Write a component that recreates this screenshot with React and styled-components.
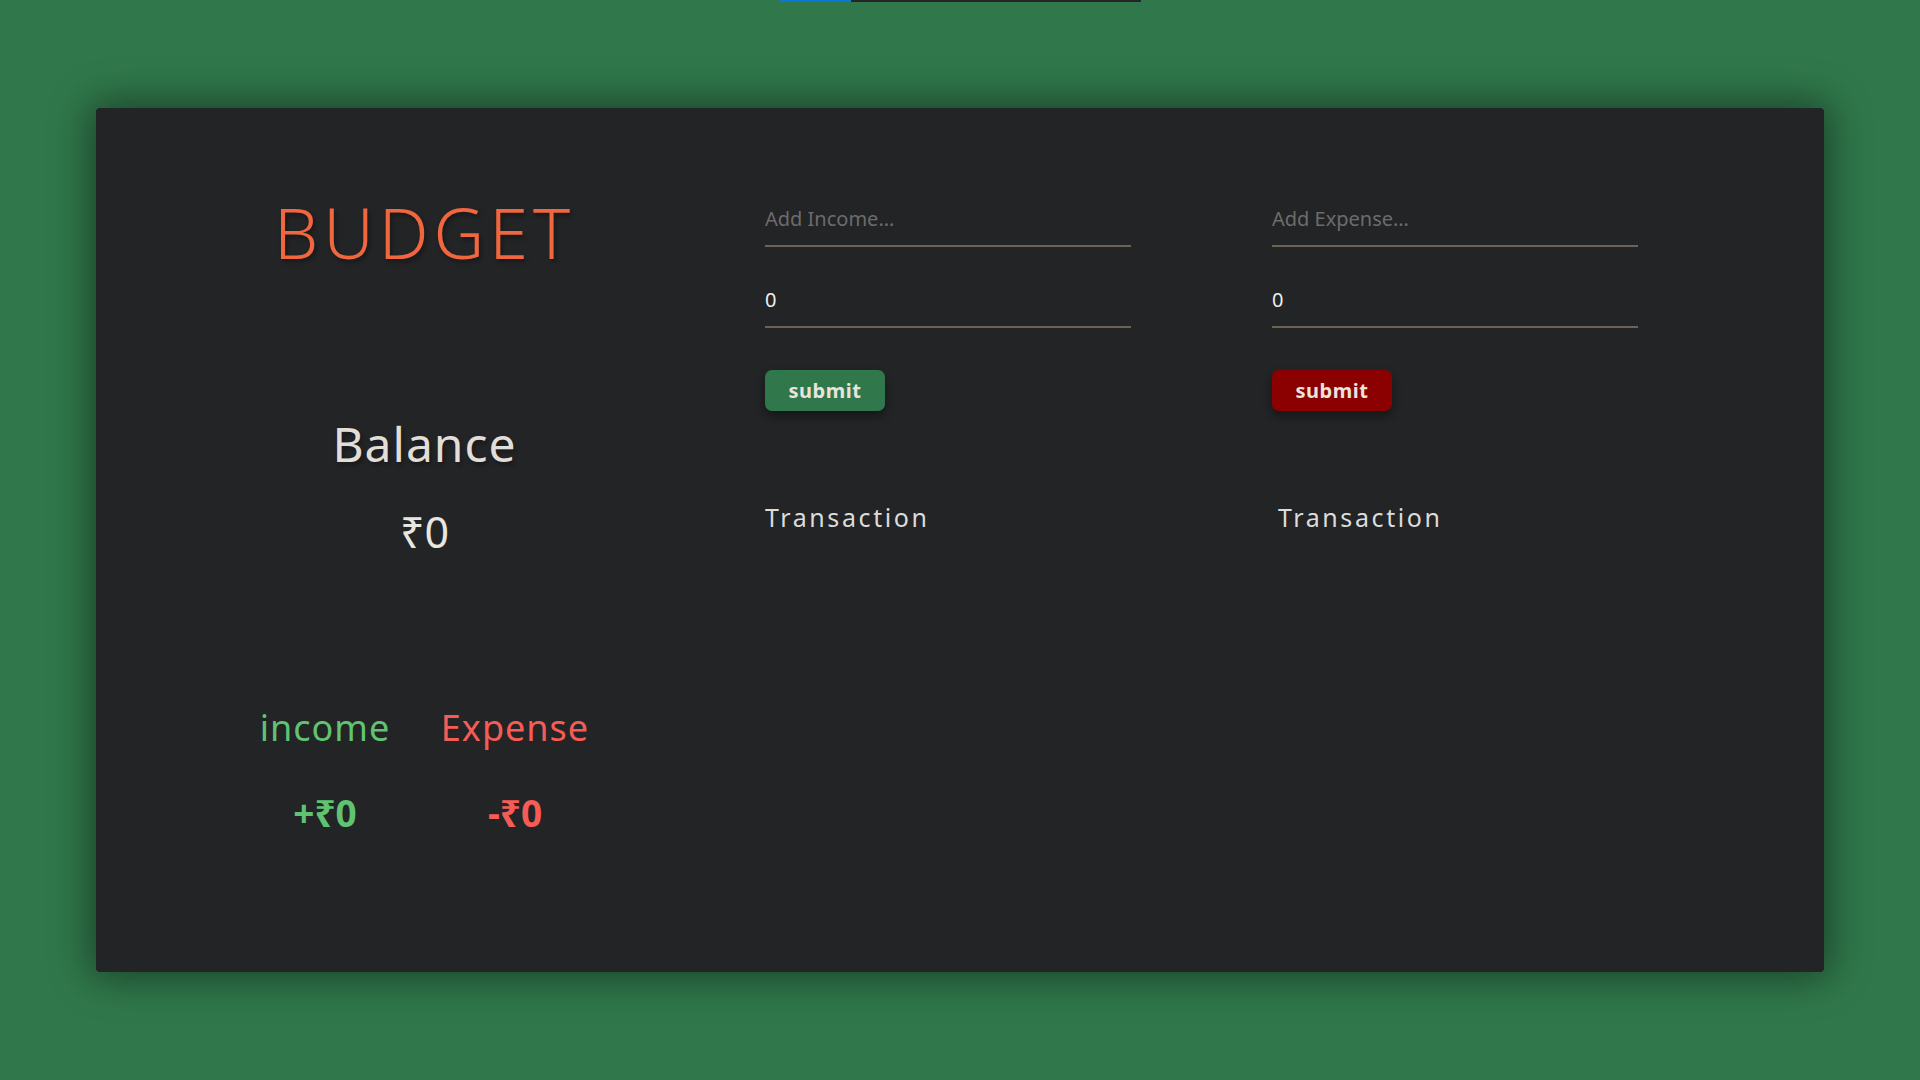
import React from 'react';
import styled, { createGlobalStyle } from 'styled-components';

const GlobalStyle = createGlobalStyle`
  html, body {
    margin: 0;
    padding: 0;
    background-color: #30784b;
    font-family: "Noto Sans", "DejaVu Sans", sans-serif;
  }
  * {
    box-sizing: border-box;
  }
`;

const Page = styled.div`
  min-height: 100vh;
  display: flex;
  flex-direction: column;
  align-items: center;
`;

const Progress = styled.div`
  width: 362px;
  height: 2px;
  background-color: #232426;
  & > span {
    display: block;
    height: 100%;
    width: ${p => p.$value}%;
    background-color: #0a78d4;
  }
`;

const Card = styled.div`
  width: 1728px;
  height: 864px;
  margin-top: 106px;
  padding-top: 89px;
  background-color: #232426;
  border-radius: 4px;
  box-shadow: 0 0 40px 6px rgba(0, 0, 0, 0.45);
  display: grid;
  grid-template-columns: 657px 495px 1fr;
  column-gap: 12px;
  align-items: start;
`;

const Summary = styled.div`
  display: flex;
  flex-direction: column;
  align-items: center;
`;

const Title = styled.h1`
  margin: 0;
  font-size: 70px;
  line-height: 1;
  font-weight: 300;
  letter-spacing: 5px;
  color: #f0673f;
  text-shadow: 2px 3px 4px rgba(0, 0, 0, 0.35);
`;

const BalanceLabel = styled.h2`
  margin: 153px 0 0;
  font-size: 48px;
  line-height: 1;
  font-weight: 400;
  letter-spacing: 1px;
  color: #e2ded7;
  text-shadow: 2px 3px 4px rgba(0, 0, 0, 0.35);
`;

const BalanceValue = styled.div`
  margin-top: 42px;
  font-size: 43px;
  line-height: 1;
  color: #e8e6e1;
`;

const Split = styled.div`
  margin-top: 157px;
  margin-right: 9px;
  display: grid;
  grid-template-columns: 190px 190px;
  justify-items: center;
`;

const Stat = styled.div`
  display: flex;
  flex-direction: column;
  align-items: center;
  color: ${p => p.$color};
`;

const StatLabel = styled.div`
  font-size: 36px;
  line-height: 1;
  letter-spacing: 1px;
`;

const StatValue = styled.div`
  margin-top: 48px;
  font-size: 37px;
  line-height: 1;
  font-weight: 700;
`;

const Form = styled.div`
  padding-top: 9px;
  display: flex;
  flex-direction: column;
  align-items: flex-start;
`;

const Field = styled.input`
  width: 366px;
  height: 41px;
  padding: 0 0 14px;
  margin-bottom: 40px;
  border: none;
  border-bottom: 2px solid #6b6455;
  background: transparent;
  color: #eeeeee;
  font-family: inherit;
  font-size: 20px;
  outline: none;
  &::placeholder {
    color: #6c6c6c;
  }
`;

const Submit = styled.button`
  width: 120px;
  height: 41px;
  margin-top: 2px;
  border: none;
  border-radius: 7px;
  background-color: ${p => p.$color};
  color: #e8e4dc;
  font-family: inherit;
  font-size: 20px;
  font-weight: 700;
  letter-spacing: 0.5px;
  box-shadow: 0 5px 10px rgba(0, 0, 0, 0.4);
  cursor: pointer;
`;

const ListTitle = styled.h3`
  margin: 94px 0 0;
  padding-left: ${p => p.$indent || 0}px;
  font-size: 25px;
  line-height: 1;
  font-weight: 400;
  letter-spacing: 2.6px;
  color: #dcdcdc;
`;

const EntryForm = ({ placeholder, color, indent }) => (
  <Form>
    <Field type="text" placeholder={placeholder} />
    <Field type="number" defaultValue={0} />
    <Submit $color={color}>submit</Submit>
    <ListTitle $indent={indent}>Transaction</ListTitle>
  </Form>
);

export default function App() {
  return (
    <Page>
      <GlobalStyle />
      <Progress $value={20}>
        <span />
      </Progress>
      <Card>
        <Summary>
          <Title>BUDGET</Title>
          <BalanceLabel>Balance</BalanceLabel>
          <BalanceValue>₹0</BalanceValue>
          <Split>
            <Stat $color="#60c372">
              <StatLabel>income</StatLabel>
              <StatValue>+₹0</StatValue>
            </Stat>
            <Stat $color="#f65c56">
              <StatLabel>Expense</StatLabel>
              <StatValue>-₹0</StatValue>
            </Stat>
          </Split>
        </Summary>
        <EntryForm placeholder="Add Income…" color="#30784b" />
        <EntryForm placeholder="Add Expense…" color="#8b0000" indent={6} />
      </Card>
    </Page>
  );
}
